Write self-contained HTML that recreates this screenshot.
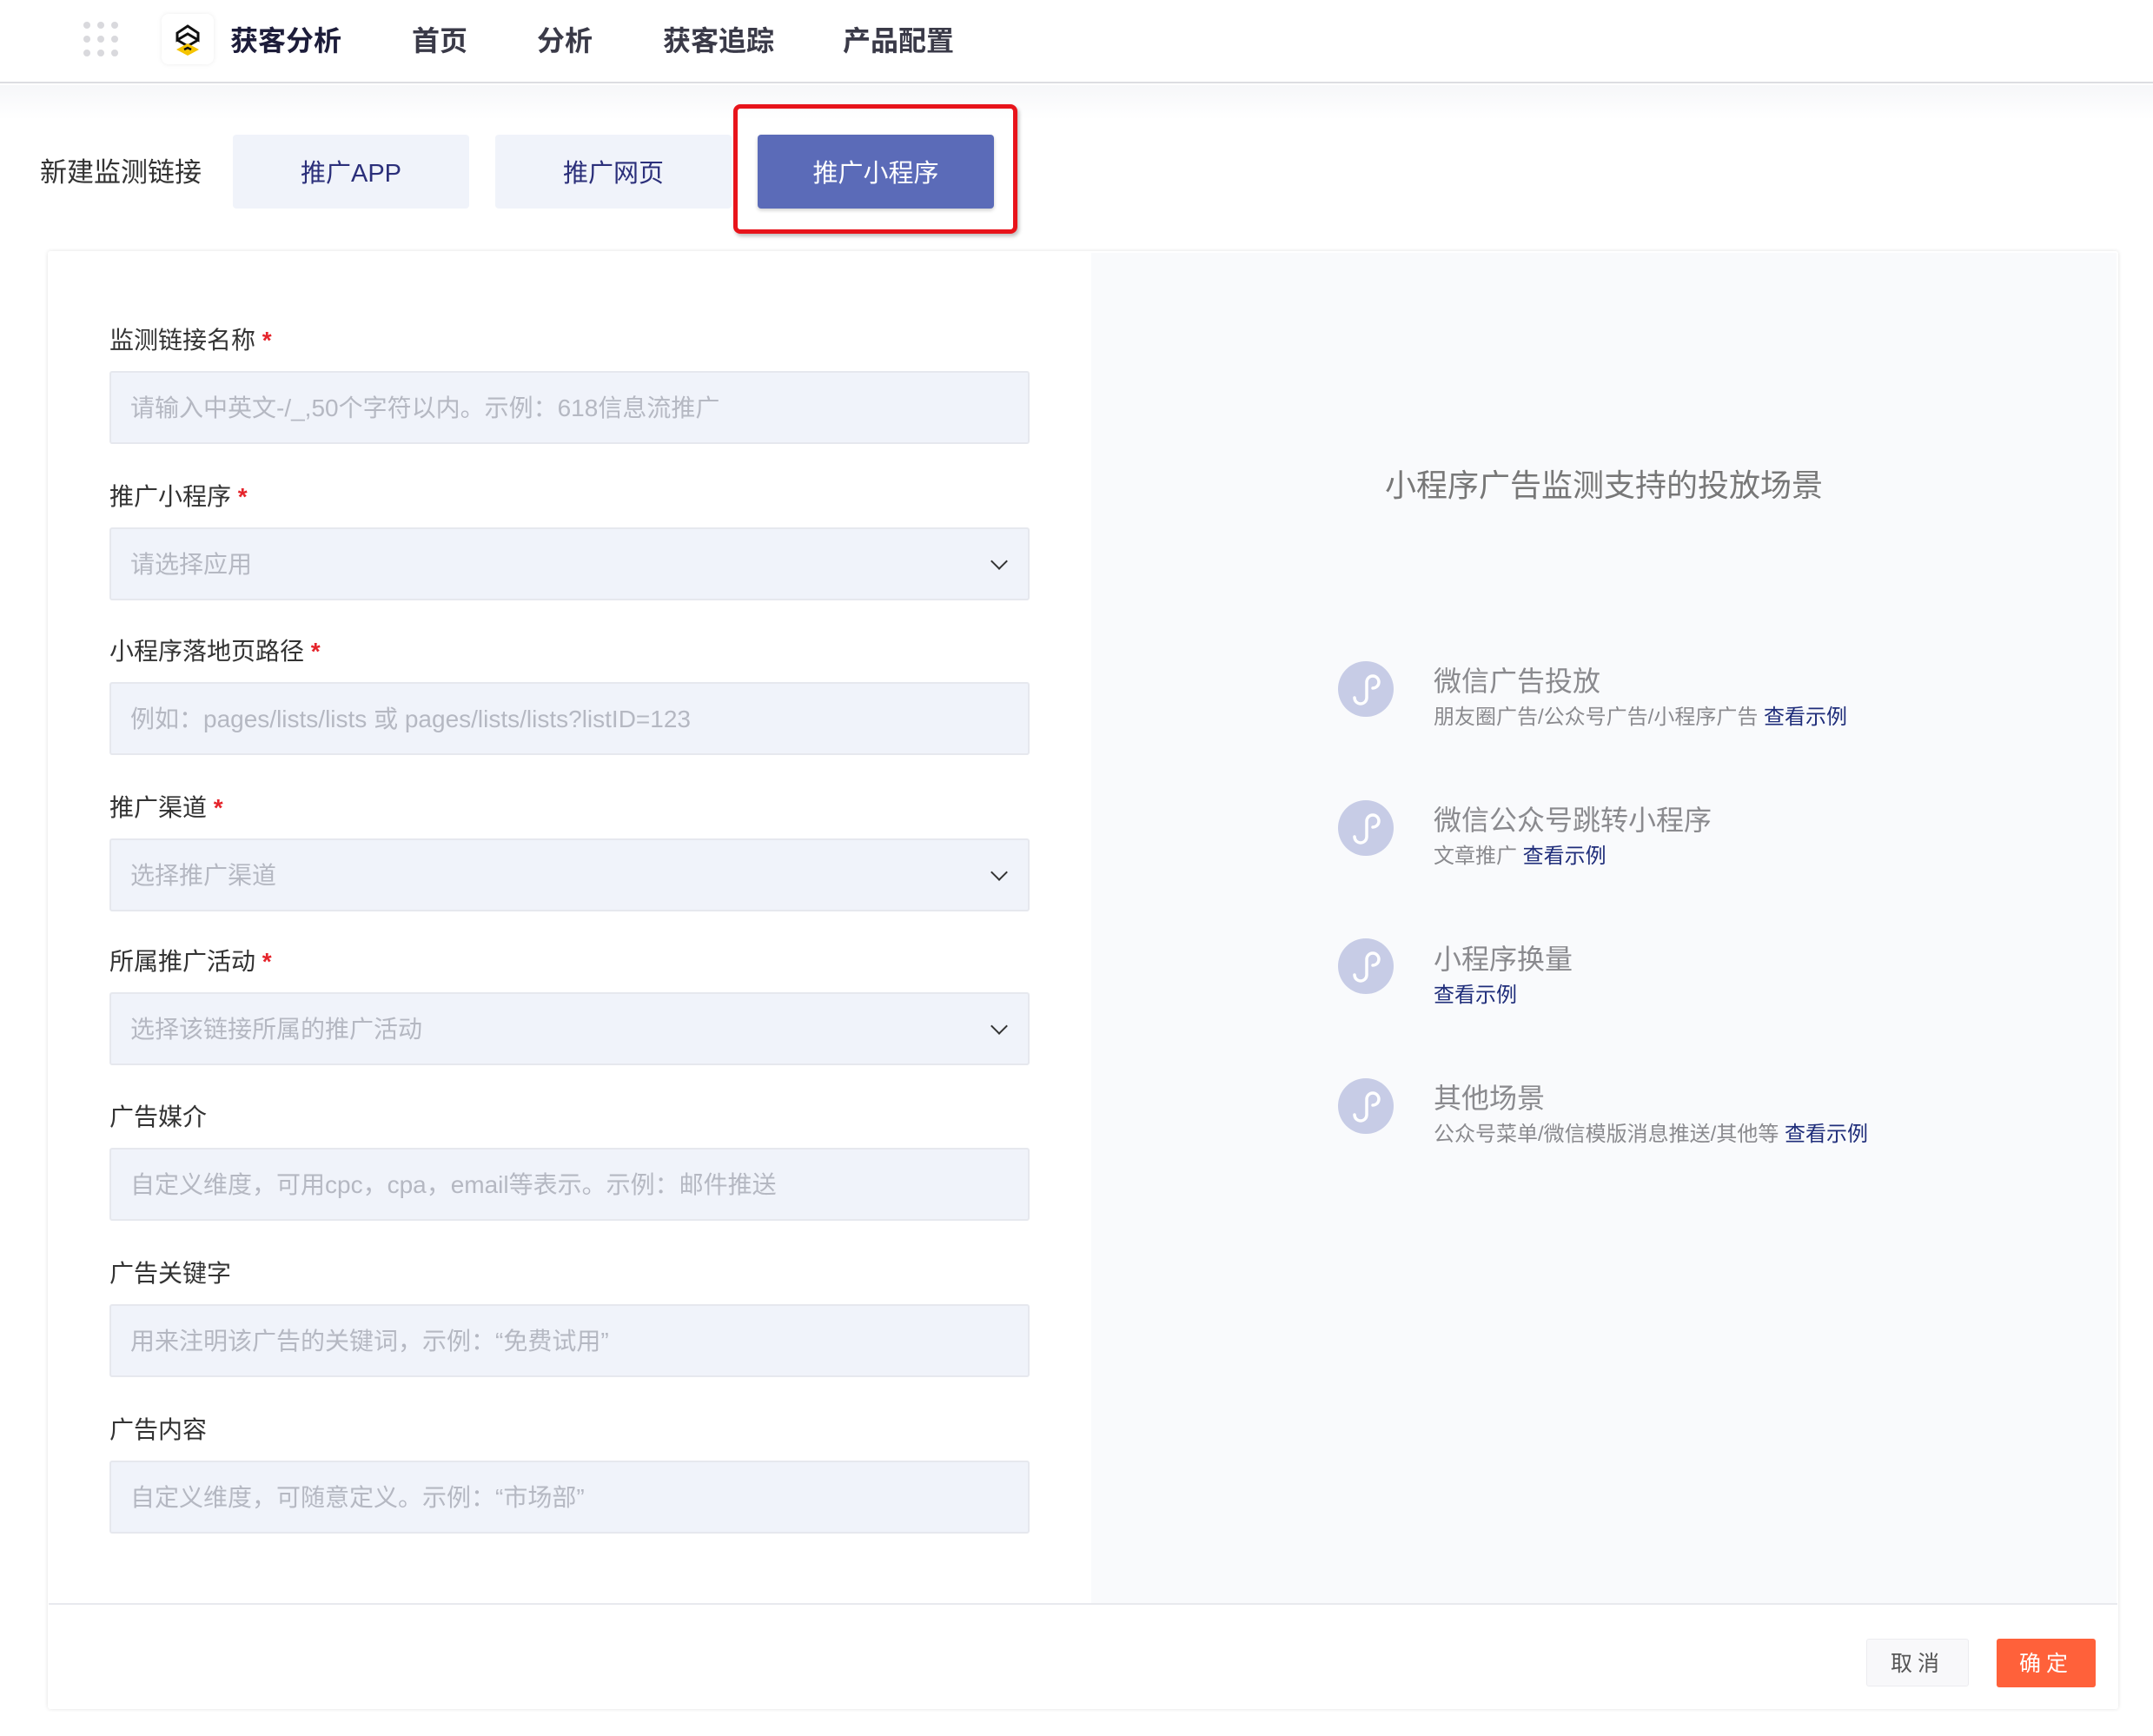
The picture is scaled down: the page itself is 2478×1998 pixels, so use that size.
<!DOCTYPE html>
<html><head><meta charset="utf-8"><style>
*{margin:0;padding:0;box-sizing:border-box}
body{width:2478px;height:1998px;background:#fff;font-family:"Liberation Sans","Noto Sans CJK SC",sans-serif;position:relative;overflow:hidden}
.a{position:absolute}
.hdr{left:0;top:0;width:2478px;height:96px;border-bottom:2px solid #dcdde2;background:#fff}
.nav{top:22px;font-size:32px;color:#3a3a48;font-weight:bold}
.tab{top:155px;height:85px;width:272px;background:#f0f3fa;border-radius:4px;color:#2b2f7a;font-size:29px;display:flex;align-items:center;justify-content:center;padding-bottom:2px}
.card{left:55px;top:289px;width:2383px;height:1678px;background:#fff;box-shadow:0 0 5px rgba(0,0,0,.12);border-radius:3px}
.lbl{left:126px;font-size:28px;color:#333}
.lbl b{color:#e5242b;font-weight:bold}
.inp{left:126px;width:1059px;height:84px;background:#f0f3fa;border:2px solid #e6e8ee;border-radius:3px;font-size:28px;color:#b5b8c2;padding-left:22px;padding-bottom:3px;display:flex;align-items:center}
.chev{position:absolute;right:26px;top:30px;width:14px;height:14px;border-right:2px solid #333;border-bottom:2px solid #333;transform:rotate(45deg)}
.ic{left:1540px;width:64px;height:64px;border-radius:50%;background:#c7cce6}
.t{left:1650px;font-size:32px;color:#8a8a8e}
.s{left:1650px;font-size:24px;color:#8a8a8e}
.s span{color:#1f2d7a}
</style></head><body>
<div class="a hdr"></div>
<svg class="a" style="left:95px;top:24px" width="44" height="44"><g fill="#d9d9dd"><circle cx="5" cy="5" r="4"/><circle cx="21" cy="5" r="4"/><circle cx="37" cy="5" r="4"/><circle cx="5" cy="21" r="4"/><circle cx="21" cy="21" r="4"/><circle cx="37" cy="21" r="4"/><circle cx="5" cy="37" r="4"/><circle cx="21" cy="37" r="4"/><circle cx="37" cy="37" r="4"/></g></svg>
<div class="a" style="left:186px;top:16px;width:60px;height:58px;background:#fff;border-radius:8px;box-shadow:0 0 6px rgba(0,0,0,.08)"></div>
<svg class="a" style="left:201px;top:28px" width="30" height="36"><path d="M15 2 L27 10 L27 18 L15 11 L3 18 L3 10 Z M3 18 L15 25 L27 18" fill="none" stroke="#111" stroke-width="3"/><path d="M15 22 L28 29 L15 36 L2 29 Z" fill="#f5c400"/><path d="M11 29 L15 27 L19 29" stroke="#111" stroke-width="2.5" fill="none"/></svg>
<div class="a nav" style="left:265px;color:#1d1d3a">获客分析</div>
<div class="a nav" style="left:474px">首页</div>
<div class="a nav" style="left:618px">分析</div>
<div class="a nav" style="left:763px">获客追踪</div>
<div class="a nav" style="left:970px">产品配置</div>
<div class="a" style="left:0;top:98px;width:2478px;height:40px;background:linear-gradient(#f6f7f9,#fff)"></div>
<div class="a" style="left:46px;top:173px;font-size:31px;color:#333">新建监测链接</div>
<div class="a tab" style="left:268px">推广APP</div>
<div class="a tab" style="left:570px">推广网页</div>
<div class="a tab" style="left:872px;background:#5b6bb8;color:#fff;box-shadow:0 2px 4px rgba(0,0,0,.2)">推广小程序</div>
<div class="a" style="left:844px;top:120px;width:327px;height:149px;border:5px solid #e8141b;border-radius:8px;box-shadow:2px 3px 4px rgba(0,0,0,.25)"></div>
<div class="a card"></div>
<div class="a" style="left:1256px;top:291px;width:1180px;height:1554px;background:#f9fafc"></div>
<div class="a" style="left:56px;top:1845px;width:2381px;height:2px;background:#e8e9ee"></div>

<div class="a lbl" style="top:370px">监测链接名称 <b>*</b></div>
<div class="a inp" style="top:427px">请输入中英文-/_,50个字符以内。示例：618信息流推广</div>
<div class="a lbl" style="top:550px">推广小程序 <b>*</b></div>
<div class="a inp" style="top:607px">请选择应用<i class="chev"></i></div>
<div class="a lbl" style="top:728px">小程序落地页路径 <b>*</b></div>
<div class="a inp" style="top:785px">例如：pages/lists/lists 或 pages/lists/lists?listID=123</div>
<div class="a lbl" style="top:908px">推广渠道 <b>*</b></div>
<div class="a inp" style="top:965px">选择推广渠道<i class="chev"></i></div>
<div class="a lbl" style="top:1085px">所属推广活动 <b>*</b></div>
<div class="a inp" style="top:1142px">选择该链接所属的推广活动<i class="chev"></i></div>
<div class="a lbl" style="top:1264px">广告媒介</div>
<div class="a inp" style="top:1321px">自定义维度，可用cpc，cpa，email等表示。示例：邮件推送</div>
<div class="a lbl" style="top:1444px">广告关键字</div>
<div class="a inp" style="top:1501px">用来注明该广告的关键词，示例：“免费试用”</div>
<div class="a lbl" style="top:1624px">广告内容</div>
<div class="a inp" style="top:1681px">自定义维度，可随意定义。示例：“市场部”</div>

<div class="a" style="left:1256px;width:1180px;top:530px;text-align:center;font-size:36px;color:#777">小程序广告监测支持的投放场景</div>

<svg width="0" height="0" style="position:absolute"><defs><symbol id="mp" viewBox="0 0 64 64"><path d="M19 42 a7 7 0 1 0 14 0 V24 a7 7 0 1 1 7 7" fill="none" stroke="#fff" stroke-width="3.5" stroke-linecap="round"/></symbol></defs></svg>
<svg class="a ic" style="top:761px"><use href="#mp" width="64" height="64"/></svg>
<div class="a t" style="top:759px">微信广告投放</div>
<div class="a s" style="top:805px">朋友圈广告/公众号广告/小程序广告 <span>查看示例</span></div>
<svg class="a ic" style="top:921px"><use href="#mp" width="64" height="64"/></svg>
<div class="a t" style="top:919px">微信公众号跳转小程序</div>
<div class="a s" style="top:965px">文章推广 <span>查看示例</span></div>
<svg class="a ic" style="top:1080px"><use href="#mp" width="64" height="64"/></svg>
<div class="a t" style="top:1079px">小程序换量</div>
<div class="a s" style="top:1125px"><span>查看示例</span></div>
<svg class="a ic" style="top:1241px"><use href="#mp" width="64" height="64"/></svg>
<div class="a t" style="top:1239px">其他场景</div>
<div class="a s" style="top:1285px">公众号菜单/微信模版消息推送/其他等 <span>查看示例</span></div>

<div class="a" style="left:2148px;top:1886px;width:118px;height:55px;background:#f8f8fa;border:1px solid #ececf0;border-radius:3px;font-size:25px;color:#555;display:flex;align-items:center;justify-content:center;letter-spacing:6px;padding-bottom:2px">取消</div>
<div class="a" style="left:2298px;top:1886px;width:114px;height:56px;background:#ff613a;border-radius:3px;font-size:25px;color:#fff;display:flex;align-items:center;justify-content:center;letter-spacing:6px;padding-bottom:2px">确定</div>
</body></html>
